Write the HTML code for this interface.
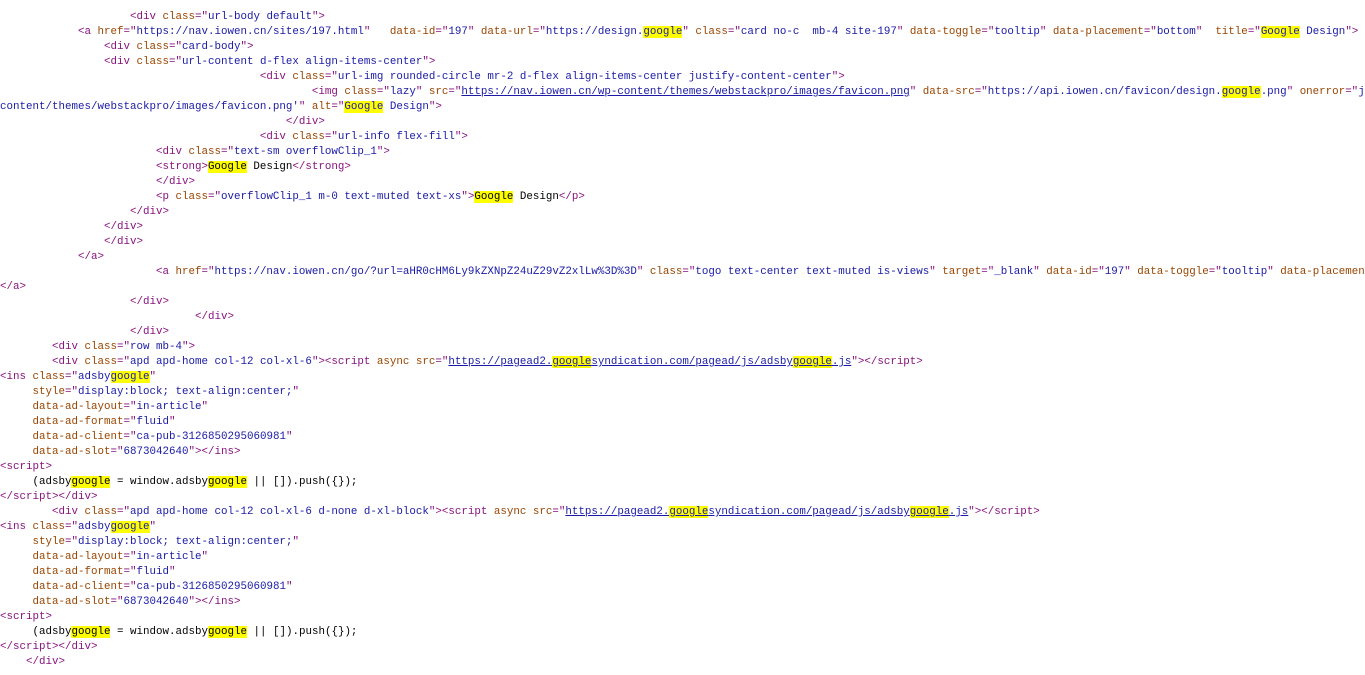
<!DOCTYPE html>
<html><head><meta charset="utf-8"><style>
html,body{margin:0;padding:0;background:#fff;width:1365px;height:675px;overflow:hidden}
pre{margin:0;padding-top:10px;font-family:"Liberation Mono","Noto Sans CJK SC",monospace;font-size:10.83px;line-height:15px;color:#000;white-space:pre;overflow:hidden}
.t{color:#881280}.a{color:#994500}.v{color:#1a1aa6}.u{color:#1a1aa6;text-decoration:underline}
.h{background:#ffff00}
</style></head><body><pre>                    <span class="t">&lt;div </span><span class="a">class</span><span class="t">="</span><span class="v">url-body default</span><span class="t">"&gt;</span>
            <span class="t">&lt;a </span><span class="a">href</span><span class="t">="</span><span class="v">https://nav.iowen.cn/sites/197.html</span><span class="t">"</span>   <span class="a">data-id</span><span class="t">="</span><span class="v">197</span><span class="t">"</span> <span class="a">data-url</span><span class="t">="</span><span class="v">https://design.<span class="h">google</span></span><span class="t">"</span> <span class="a">class</span><span class="t">="</span><span class="v">card no-c  mb-4 site-197</span><span class="t">"</span> <span class="a">data-toggle</span><span class="t">="</span><span class="v">tooltip</span><span class="t">"</span> <span class="a">data-placement</span><span class="t">="</span><span class="v">bottom</span><span class="t">"</span>  <span class="a">title</span><span class="t">="</span><span class="v"><span class="h">Google</span> Design</span><span class="t">"&gt;</span>
                <span class="t">&lt;div </span><span class="a">class</span><span class="t">="</span><span class="v">card-body</span><span class="t">"&gt;</span>
                <span class="t">&lt;div </span><span class="a">class</span><span class="t">="</span><span class="v">url-content d-flex align-items-center</span><span class="t">"&gt;</span>
                                        <span class="t">&lt;div </span><span class="a">class</span><span class="t">="</span><span class="v">url-img rounded-circle mr-2 d-flex align-items-center justify-content-center</span><span class="t">"&gt;</span>
                                                <span class="t">&lt;img </span><span class="a">class</span><span class="t">="</span><span class="v">lazy</span><span class="t">"</span> <span class="a">src</span><span class="t">="</span><span class="u">https://nav.iowen.cn/wp-content/themes/webstackpro/images/favicon.png</span><span class="t">"</span> <span class="a">data-src</span><span class="t">="</span><span class="v">https://api.iowen.cn/favicon/design.<span class="h">google</span>.png</span><span class="t">"</span> <span class="a">onerror</span><span class="t">="</span><span class="v">javascript:this.src='https://nav.iowen.cn/wp-</span>
<span class="v">content/themes/webstackpro/images/favicon.png'</span><span class="t">"</span> <span class="a">alt</span><span class="t">="</span><span class="v"><span class="h">Google</span> Design</span><span class="t">"&gt;</span>
                                            <span class="t">&lt;/div&gt;</span>
                                        <span class="t">&lt;div </span><span class="a">class</span><span class="t">="</span><span class="v">url-info flex-fill</span><span class="t">"&gt;</span>
                        <span class="t">&lt;div </span><span class="a">class</span><span class="t">="</span><span class="v">text-sm overflowClip_1</span><span class="t">"&gt;</span>
                        <span class="t">&lt;strong&gt;</span><span class="h">Google</span> Design<span class="t">&lt;/strong&gt;</span>
                        <span class="t">&lt;/div&gt;</span>
                        <span class="t">&lt;p </span><span class="a">class</span><span class="t">="</span><span class="v">overflowClip_1 m-0 text-muted text-xs</span><span class="t">"&gt;</span><span class="h">Google</span> Design<span class="t">&lt;/p&gt;</span>
                    <span class="t">&lt;/div&gt;</span>
                <span class="t">&lt;/div&gt;</span>
                <span class="t">&lt;/div&gt;</span>
            <span class="t">&lt;/a&gt;</span>
                        <span class="t">&lt;a </span><span class="a">href</span><span class="t">="</span><span class="v">https://nav.iowen.cn/go/?url=aHR0cHM6Ly9kZXNpZ24uZ29vZ2xlLw%3D%3D</span><span class="t">"</span> <span class="a">class</span><span class="t">="</span><span class="v">togo text-center text-muted is-views</span><span class="t">"</span> <span class="a">target</span><span class="t">="</span><span class="v">_blank</span><span class="t">"</span> <span class="a">data-id</span><span class="t">="</span><span class="v">197</span><span class="t">"</span> <span class="a">data-toggle</span><span class="t">="</span><span class="v">tooltip</span><span class="t">"</span> <span class="a">data-placement</span><span class="t">="</span><span class="v">right</span><span class="t">"</span>
<span class="t">&lt;/a&gt;</span>
                    <span class="t">&lt;/div&gt;</span>
                              <span class="t">&lt;/div&gt;</span>
                    <span class="t">&lt;/div&gt;</span>
        <span class="t">&lt;div </span><span class="a">class</span><span class="t">="</span><span class="v">row mb-4</span><span class="t">"&gt;</span>
        <span class="t">&lt;div </span><span class="a">class</span><span class="t">="</span><span class="v">apd apd-home col-12 col-xl-6</span><span class="t">"&gt;&lt;script </span><span class="a">async</span> <span class="a">src</span><span class="t">="</span><span class="u">https://pagead2.<span class="h">google</span>syndication.com/pagead/js/adsby<span class="h">google</span>.js</span><span class="t">"&gt;&lt;/script&gt;</span>
<span class="t">&lt;ins </span><span class="a">class</span><span class="t">="</span><span class="v">adsby<span class="h">google</span></span><span class="t">"</span>
     <span class="a">style</span><span class="t">="</span><span class="v">display:block; text-align:center;</span><span class="t">"</span>
     <span class="a">data-ad-layout</span><span class="t">="</span><span class="v">in-article</span><span class="t">"</span>
     <span class="a">data-ad-format</span><span class="t">="</span><span class="v">fluid</span><span class="t">"</span>
     <span class="a">data-ad-client</span><span class="t">="</span><span class="v">ca-pub-3126850295060981</span><span class="t">"</span>
     <span class="a">data-ad-slot</span><span class="t">="</span><span class="v">6873042640</span><span class="t">"&gt;&lt;/ins&gt;</span>
<span class="t">&lt;script&gt;</span>
     (adsby<span class="h">google</span> = window.adsby<span class="h">google</span> || []).push({});
<span class="t">&lt;/script&gt;&lt;/div&gt;</span>
        <span class="t">&lt;div </span><span class="a">class</span><span class="t">="</span><span class="v">apd apd-home col-12 col-xl-6 d-none d-xl-block</span><span class="t">"&gt;&lt;script </span><span class="a">async</span> <span class="a">src</span><span class="t">="</span><span class="u">https://pagead2.<span class="h">google</span>syndication.com/pagead/js/adsby<span class="h">google</span>.js</span><span class="t">"&gt;&lt;/script&gt;</span>
<span class="t">&lt;ins </span><span class="a">class</span><span class="t">="</span><span class="v">adsby<span class="h">google</span></span><span class="t">"</span>
     <span class="a">style</span><span class="t">="</span><span class="v">display:block; text-align:center;</span><span class="t">"</span>
     <span class="a">data-ad-layout</span><span class="t">="</span><span class="v">in-article</span><span class="t">"</span>
     <span class="a">data-ad-format</span><span class="t">="</span><span class="v">fluid</span><span class="t">"</span>
     <span class="a">data-ad-client</span><span class="t">="</span><span class="v">ca-pub-3126850295060981</span><span class="t">"</span>
     <span class="a">data-ad-slot</span><span class="t">="</span><span class="v">6873042640</span><span class="t">"&gt;&lt;/ins&gt;</span>
<span class="t">&lt;script&gt;</span>
     (adsby<span class="h">google</span> = window.adsby<span class="h">google</span> || []).push({});
<span class="t">&lt;/script&gt;&lt;/div&gt;</span>
    <span class="t">&lt;/div&gt;</span>
</pre></body></html>
